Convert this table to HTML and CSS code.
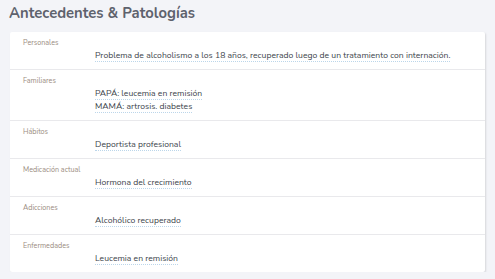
FILE: index.html
```html
<!DOCTYPE html>
<html lang="es">
<head>
<meta charset="utf-8">
<link rel="stylesheet" href="styles.css">
</head>
<body>
<main class="page">
  <h1 class="title">Antecedentes &amp; Patologías</h1>
  <section class="card">
    <div class="row">
      <div class="label">Personales</div>
      <div class="values"><span class="value">Problema de alcoholismo a los 18 años, recuperado luego de un tratamiento con internación.</span></div>
    </div>
    <div class="row">
      <div class="label">Familiares</div>
      <div class="values"><span class="value">PAPÁ: leucemia en remisión</span><span class="value">MAMÁ: artrosis. diabetes</span></div>
    </div>
    <div class="row">
      <div class="label">Hábitos</div>
      <div class="values"><span class="value">Deportista profesional</span></div>
    </div>
    <div class="row">
      <div class="label">Medicación actual</div>
      <div class="values"><span class="value">Hormona del crecimiento</span></div>
    </div>
    <div class="row">
      <div class="label">Adicciones</div>
      <div class="values"><span class="value">Alcohólico recuperado</span></div>
    </div>
    <div class="row">
      <div class="label">Enfermedades</div>
      <div class="values"><span class="value">Leucemia en remisión</span></div>
    </div>
  </section>
</main>
</body>
</html>
```
FILE: styles.css
```css
html, body {
  margin: 0;
  padding: 0;
  background: #f3f4f8;
}
body {
  font-family: Nunito, Lato, "Noto Sans", sans-serif;
}
.page {
  padding: 2px 10px 0 10px;
}
.title {
  margin: 0 0 8px -1px;
  font-size: 14.8px;
  line-height: 22px;
  font-weight: 700;
  color: #5e626d;
}
.card {
  background: #fff;
  border-radius: 2px;
  box-shadow: 1px 1px 2px rgba(0,0,0,0.12);
  display: flex;
  flex-direction: column;
}
.row {
  padding: 6px 13px 6px 13px;
  border-bottom: 1px solid #e9e9ec;
  display: flex;
  flex-direction: column;
}
.row:last-child {
  border-bottom: none;
}
.label {
  font-size: 7.2px;
  line-height: 10px;
  color: #9a8c80;
  margin-bottom: 2px;
}
.values {
  padding-left: 72px;
  display: flex;
  flex-direction: column;
  align-items: flex-start;
}
.value {
  font-size: 8.6px;
  color: #3b3f4a;
  border-bottom: 1px dotted #bcd6ea;
  line-height: 11px;
  margin-bottom: 1px;
}
```
